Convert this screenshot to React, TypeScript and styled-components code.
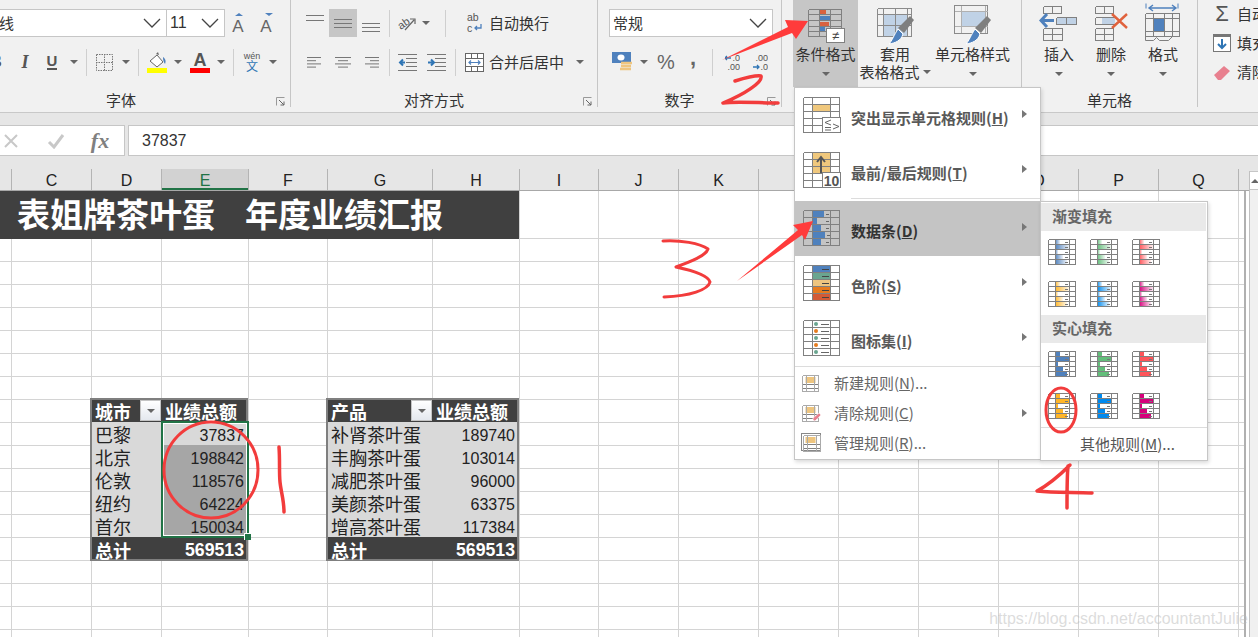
import React from "react";
import styled, { createGlobalStyle } from "styled-components";

const CJK = `"Noto Sans CJK SC", "Liberation Sans", sans-serif`;
const LATIN = `"Liberation Sans", "Noto Sans CJK SC", sans-serif`;
const LINE = "#808080";

const Global = createGlobalStyle`
  html, body { margin: 0; padding: 0; background: #fff; overflow: hidden; }
  * { box-sizing: border-box; }
`;

const Page = styled.div`
  position: relative;
  width: 1258px;
  height: 637px;
  overflow: hidden;
  font-family: ${CJK};
  color: #444;
`;

/* ---------- ribbon ---------- */
const Ribbon = styled.div`
  display: flex;
  height: 113px;
  background: #f1f1f1;
  border-bottom: 1px solid #c8c8c8;
`;
const Group = styled.section<{ $w: number; $ml?: number; $flat?: boolean }>`
  position: relative;
  flex: 0 0 ${(p) => p.$w}px;
  height: 107px;
  margin-left: ${(p) => p.$ml ?? 0}px;
  padding-top: ${(p) => (p.$flat ? 0 : 9)}px;
  border-right: 1px solid #c6c6c6;
  display: flex;
  flex-direction: column;
`;
const Row = styled.div<{ $pad?: number }>`
  display: flex;
  align-items: center;
  height: 28px;
  padding-left: ${(p) => p.$pad ?? 0}px;
  & + & { margin-top: 11px; }
`;
const GroupLabel = styled.div<{ $pr?: number }>`
  position: absolute;
  left: 0;
  right: 0;
  bottom: -2px;
  padding-right: ${(p) => p.$pr ?? 0}px;
  text-align: center;
  font-size: 15px;
  line-height: 18px;
  color: #333;
`;
const Launcher = styled.svg`
  position: absolute;
  right: 5px;
  bottom: 1px;
`;
const SelectBox = styled.div<{ $w: number }>`
  flex: 0 0 ${(p) => p.$w}px;
  height: 28px;
  margin-right: -1px;
  background: #fff;
  border: 1px solid #c6c6c6;
  display: flex;
  align-items: center;
  justify-content: space-between;
  padding: 0 5px 2px 3px;
  font-size: 15px;
  color: #333;
`;
const SizeText = styled.span`
  font-family: ${LATIN};
  font-size: 16px;
  padding-top: 2px;
`;
const Slot = styled.div<{ $w: number; $on?: boolean }>`
  flex: 0 0 ${(p) => p.$w}px;
  height: 28px;
  display: flex;
  align-items: center;
  justify-content: center;
  background: ${(p) => (p.$on ? "#c6c6c6" : "transparent")};
`;
const Sep = styled.div<{ $w?: number }>`
  flex: 0 0 ${(p) => p.$w ?? 8}px;
  height: 27px;
  position: relative;
  &::after {
    content: "";
    position: absolute;
    left: 50%;
    top: 0;
    bottom: 0;
    width: 1px;
    background: #cfcfcf;
  }
`;
const Caret = styled.span`
  display: inline-block;
  width: 0;
  height: 0;
  border-left: 4px solid transparent;
  border-right: 4px solid transparent;
  border-top: 4px solid #666;
`;
const GlyphB = styled.span`
  font: 700 16px ${LATIN};
  color: #555;
`;
const GlyphI = styled.span`
  font: italic 700 18px "Liberation Serif", serif;
  color: #555;
`;
const GlyphU = styled.span`
  font: 700 15px ${LATIN};
  color: #555;
  border-bottom: 2px solid #555;
  line-height: 14px;
`;
const RibbonText = styled.span`
  font-size: 15px;
  color: #333;
  white-space: nowrap;
  margin-top: -2px;
`;
const Percent = styled.span`
  font: 400 20px ${LATIN};
  color: #666;
`;
const Comma = styled.span`
  font: 700 22px ${LATIN};
  color: #666;
  margin-top: -8px;
`;
const BigRow = styled.div<{ $pad: number }>`
  display: flex;
  padding-left: ${(p) => p.$pad}px;
`;
const BigButton = styled.div<{ $w: number; $on?: boolean }>`
  flex: 0 0 ${(p) => p.$w}px;
  height: 87px;
  background: ${(p) => (p.$on ? "#c6c6c6" : "transparent")};
  display: flex;
  flex-direction: column;
  align-items: center;
  font-size: 15px;
  line-height: 18px;
  color: #333;
  white-space: nowrap;
`;
const BigIcon = styled.svg`
  display: block;
  height: 45px;
  flex: none;
`;
const BigLine = styled.div`
  display: flex;
  align-items: center;
  gap: 3px;
  height: 18px;
`;
const BigCaret = styled.div`
  height: 22px;
  display: flex;
  align-items: center;
`;
const EditRow = styled.div`
  display: flex;
  align-items: center;
  height: 29px;
  padding-left: 14px;
  gap: 5px;
  font-size: 15px;
  color: #333;
  white-space: nowrap;
  &:first-child { margin-top: -1px; }
`;
const Sigma = styled.span`
  width: 20px;
  text-align: center;
  font: 400 22px ${LATIN};
  color: #555;
`;
const EditIconBox = styled.svg`
  flex: 0 0 20px;
`;

/* ---------- formula bar ---------- */
const Band = styled.div`
  height: 56px;
  padding: 12px 0 13px;
  background: #e6e6e6;
  display: flex;
  gap: 3px;
`;
const NameBox = styled.div`
  flex: 0 0 125px;
  display: flex;
  align-items: center;
  background: #fff;
  border: 1px solid #c6c6c6;
  border-left: 0;
`;
const FxText = styled.span`
  font: italic 700 22px "Liberation Serif", serif;
  color: #808080;
`;
const Input = styled.div`
  flex: 1;
  background: #fff;
  border: 1px solid #c6c6c6;
  border-right: 0;
  padding-left: 13px;
  display: flex;
  align-items: center;
  font: 400 16px ${LATIN};
  color: #333;
`;

/* ---------- sheet ---------- */
const COLS = [12, 80, 70, 87, 79, 105, 87, 79, 80, 80, 80, 80, 80, 80, 80, 80, 7, 12];
const TRACKS = COLS.map((c) => `${c}px`).join(" ");
const HeadRow = styled.div`
  display: grid;
  grid-template-columns: ${TRACKS};
  height: 22px;
  background: #e6e6e6;
  border-bottom: 1px solid #a8a8a8;
`;
const HeadCell = styled.div<{ $on?: boolean; $plain?: boolean }>`
  display: flex;
  align-items: center;
  justify-content: center;
  padding-top: 2px;
  font: 400 16px ${LATIN};
  color: ${(p) => (p.$on ? "#217346" : "#222")};
  background: ${(p) => (p.$on ? "#d2d2d2" : "transparent")};
  border-right: ${(p) => (p.$plain ? "0" : "1px solid #b4b4b4")};
  box-shadow: ${(p) => (p.$on ? "inset 0 -2px 0 #217346" : "none")};
`;
const Sheet = styled.div`
  display: grid;
  grid-template-columns: ${TRACKS};
  grid-template-rows: 47px repeat(18, 23px);
  height: 446px;
  background:
    linear-gradient(#fff, #fff) 0 0 / 100% 47px no-repeat,
    linear-gradient(#d4d4d4 0 1px, transparent 1px) 0 47px / 100% 23px;
`;
const Strip = styled.div<{ $c: number; $edge?: boolean; $blank?: boolean }>`
  grid-column: ${(p) => p.$c};
  grid-row: 1 / -1;
  border-right: ${(p) => (p.$blank ? "0" : p.$edge ? "2px solid #b0b0b0" : "1px solid #d4d4d4")};
  background: ${(p) => (p.$blank ? "#fff" : "transparent")};
`;
const Title = styled.h1`
  grid-column: 1 / 8;
  grid-row: 1;
  z-index: 1;
  margin: 0 1px -1px 0;
  padding: 0 0 4px 17px;
  display: flex;
  gap: 30px;
  align-items: center;
  background: #404040;
  color: #fff;
  font: 700 33px/1 ${CJK};
`;
const Table = styled.div<{ $col: string }>`
  grid-column: ${(p) => p.$col};
  grid-row: 9 / 16;
  z-index: 1;
  margin: -1px 1px -1px -2px;
  border: 2px solid #7f7f7f;
  display: grid;
  grid-template-columns: 1fr 85px;
  grid-template-rows: 22px repeat(5, 23px) 22px;
  background: #d9d9d9;
`;
const HeadText = styled.div<{ $right?: boolean }>`
  position: relative;
  height: 22px;
  background: #404040;
  color: #fff;
  font: 700 18px/23px ${CJK};
  padding-left: ${(p) => (p.$right ? 4 : 3)}px;
  white-space: nowrap;
`;
const FilterBtn = styled.span`
  position: absolute;
  right: 0;
  top: 0;
  width: 21px;
  height: 21px;
  background: linear-gradient(#fff, #e4e8ee);
  border: 1px solid #c4c4c4;
  display: flex;
  align-items: center;
  justify-content: center;
`;
const NameCell = styled.div`
  height: 23px;
  font: 400 18px/25px ${CJK};
  color: #222;
  padding-left: 3px;
  white-space: nowrap;
`;
const NumCell = styled.div<{ $shade?: boolean }>`
  font: 400 16px/28px ${LATIN};
  height: 23px;
  overflow: hidden;
  color: #222;
  text-align: right;
  padding-right: 2px;
  background: ${(p) => (p.$shade ? "#a6a6a6" : "#d9d9d9")};
`;
const TotalName = styled.div`
  height: 22px;
  background: #404040;
  color: #fff;
  font: 700 18px/26px ${CJK};
  padding-left: 3px;
`;
const TotalNum = styled.div`
  height: 22px;
  background: #404040;
  color: #fff;
  font: 700 17.7px/27px ${LATIN};
  text-align: right;
  padding-right: 2px;
`;
const Selection = styled.div`
  grid-column: 4;
  grid-row: 10 / 15;
  z-index: 2;
  position: relative;
  margin: -1px 0 -1px -1px;
  border: 2px solid #217346;
  box-shadow: inset 0 0 0 1px #fff;
  &::after {
    content: "";
    position: absolute;
    right: -4px;
    bottom: -4px;
    width: 6px;
    height: 6px;
    background: #217346;
    border: 1px solid #fff;
    border-width: 1px 0 0 1px;
  }
`;
const ScrollBar = styled.div`
  position: absolute;
  left: 1249px;
  top: 171px;
  width: 9px;
  height: 466px;
  background: #f0f0f0;
  border-left: 1px solid #c0c0c0;
`;
const ScrollBtn = styled.div`
  height: 19px;
  background: #fff;
  border: 1px solid #c6c6c6;
  border-width: 1px 0;
  display: flex;
  align-items: center;
  padding-left: 1px;
  &::before {
    content: "";
    border-left: 4px solid transparent;
    border-right: 4px solid transparent;
    border-bottom: 4px solid #666;
  }
`;
const Watermark = styled.div`
  position: absolute;
  right: 10px;
  top: 608px;
  z-index: 5;
  font: 400 16px/22px ${LATIN};
  color: rgba(185, 185, 185, 0.5);
  white-space: nowrap;
`;

/* ---------- menus ---------- */
const Menu = styled.div`
  position: absolute;
  left: 794px;
  top: 87px;
  width: 247px;
  height: 373px;
  background: #fff;
  border: 1px solid #c6c6c6;
  box-shadow: 1px 2px 4px rgba(0, 0, 0, 0.15);
  z-index: 3;
`;
const BigItem = styled.div<{ $on?: boolean }>`
  display: flex;
  align-items: center;
  height: 55px;
  padding-left: 8px;
  gap: 11px;
  background: ${(p) => (p.$on ? "#c4c4c4" : "transparent")};
  font-size: 15px;
  font-weight: 700;
  color: ${(p) => (p.$on ? "#333" : "#595959")};
  white-space: nowrap;
`;
const ItemLabel = styled.span`
  padding-top: 4px;
`;
const U = styled.span`
  text-decoration: underline;
`;
const Arrow = styled.span<{ $mt?: number }>`
  margin-left: auto;
  margin-right: 13px;
  margin-top: ${(p) => p.$mt ?? -4}px;
  width: 0;
  height: 0;
  border-top: 4px solid transparent;
  border-bottom: 4px solid transparent;
  border-left: 5px solid #777;
`;
const MenuSep = styled.div<{ $ml?: number }>`
  height: 3px;
  margin-left: ${(p) => p.$ml ?? 0}px;
  border-top: 1px solid #dcdcdc;
`;
const SmallItem = styled.div`
  display: flex;
  align-items: center;
  height: 30px;
  padding: 0 0 3px 6px;
  font-size: 15px;
  color: #666;
  white-space: nowrap;
`;
const SmallIconBox = styled.svg`
  flex: 0 0 20px;
  margin-right: 13px;
`;
const Sub = styled.div`
  position: absolute;
  left: 1040px;
  top: 201px;
  width: 168px;
  height: 260px;
  padding-top: 1px;
  background: #fff;
  border: 1px solid #c6c6c6;
  box-shadow: 1px 2px 4px rgba(0, 0, 0, 0.15);
  z-index: 4;
`;
const SubHead = styled.div`
  height: 28px;
  margin-right: 1px;
  padding-left: 11px;
  background: #e9e9e9;
  font-size: 15px;
  font-weight: 700;
  line-height: 26px;
  color: #666;
`;
const SubGrid = styled.div`
  display: grid;
  grid-template-columns: repeat(3, 28px);
  gap: 16px 14px;
  padding: 8px 7px;
`;
const SubFoot = styled.div`
  border-top: 1px solid #dcdcdc;
  height: 31px;
  padding-left: 39px;
  font-size: 15px;
  line-height: 31px;
  color: #555;
  white-space: nowrap;
`;
const Marks = styled.svg`
  position: absolute;
  left: 0;
  top: 0;
  z-index: 6;
  pointer-events: none;
`;
const ChevronBox = styled.svg`
  margin-top: 2px;
`;
const IconFrame = styled.svg`
  flex: 0 0 39px;
  margin-right: -2px;
`;

/* ---------- icon parts ---------- */
const Lines = ({ xs, ys, c = LINE, w = 1 }: { xs: number[]; ys: number[]; c?: string; w?: number }) => (
  <path
    d={
      xs.map((x) => `M${x} ${ys[0]}V${ys[ys.length - 1]}`).join("") +
      ys.map((y) => `M${xs[0]} ${y}H${xs[xs.length - 1]}`).join("")
    }
    stroke={c}
    strokeWidth={w}
    fill="none"
    shapeRendering="crispEdges"
  />
);

const Chevron = () => (
  <ChevronBox width="18" height="10" viewBox="0 0 18 10">
    <path d="M1 1l8 8 8-8" fill="none" stroke="#444" strokeWidth="1.3" />
  </ChevronBox>
);

const AlignLines = ({ kind }: { kind: "top" | "mid" | "bot" | "left" | "center" | "right" }) => {
  const stroke = "#777";
  const map: Record<string, [number, number][]> = {
    left: [[0, 14], [0, 9], [0, 14], [0, 9]],
    center: [[0, 16], [3, 10], [0, 16], [3, 10]],
    right: [[2, 14], [7, 9], [2, 14], [7, 9]],
  };
  if (kind === "left" || kind === "center" || kind === "right") {
    return (
      <svg width="16" height="13" viewBox="0 0 16 13">
        {map[kind].map(([x, w], i) => (
          <path key={i} d={`M${x} ${1.5 + i * 3.2}h${w}`} stroke={stroke} />
        ))}
      </svg>
    );
  }
  const ys = kind === "top" ? [4.5, 9.5] : kind === "mid" ? [8.5, 12.5, 16.5] : [12.5, 16.5, 20.5];
  return (
    <svg width="18" height="24" viewBox="0 0 18 24">
      {ys.map((y) => (
        <path key={y} d={`M0 ${y}h18`} stroke={stroke} />
      ))}
    </svg>
  );
};

const IndentIcon = ({ flip }: { flip?: boolean }) => (
  <svg width="19" height="17" viewBox="0 0 19 17">
    <path d="M0 .5h19M8 4.5h11M8 8.5h11M8 12.5h11M0 16.5h19" stroke="#777" />
    <path d={flip ? "M1 8.5h5M4 5.5l3 3-3 3" : "M2 8.5h5M5 5.5l-3 3 3 3"} stroke="#2f75b5" strokeWidth="2" fill="none" />
  </svg>
);

const CondIcon = () => (
  <BigIcon width="40" viewBox="-1 0 40 45">
    <rect x="12" y="10" width="7" height="5" fill="#d9623f" />
    <rect x="12" y="16" width="11" height="5" fill="#4f81bd" />
    <rect x="12" y="22" width="10" height="5" fill="#d9623f" />
    <rect x="12" y="27" width="6" height="5" fill="#4f81bd" />
    <Lines xs={[1.5, 12.5, 23.5, 34.5]} ys={[9.5, 14.5, 20.5, 26.5, 31.5, 36.5]} />
    <rect x="19.5" y="28.5" width="18" height="14" fill="#fff" stroke={LINE} shapeRendering="crispEdges" />
    <text x="28.5" y="40" textAnchor="middle" fontSize="13" fill="#444" fontFamily="Liberation Sans">≠</text>
  </BigIcon>
);

const Brush = ({ x, y }: { x: number; y: number }) => (
  <g transform={`translate(${x} ${y})`}>
    <path d="M18 0l4 4-10 13-6-5z" fill="#7f7f7f" />
    <path d="M6 13l5 5c-2 7-8 9-14 10 3-3 5-9 9-15z" fill="#4f81bd" stroke="#fff" strokeWidth="1" />
  </g>
);

const TableIcon = () => (
  <BigIcon width="40" viewBox="0 0 40 45">
    <rect x="8" y="14" width="24" height="22" fill="#c0d2e6" />
    <Lines xs={[2.5, 8.5, 20.5, 32.5, 36.5]} ys={[8.5, 14.5, 25.5, 36.5]} c="#8a8a8a" />
    <Brush x={17} y={16} />
  </BigIcon>
);

const StyleIcon = () => (
  <BigIcon width="40" viewBox="0 0 40 45">
    <rect x="8" y="11" width="25" height="15" fill="#c0d2e6" />
    <rect x="1.5" y="5.5" width="33" height="28" fill="none" stroke="#8a8a8a" shapeRendering="crispEdges" />
    <path d="M8.5 5.5V33M1.5 11.5h33M1.5 26.5h33M32.5 5.5V33" stroke="#b0b0b0" shapeRendering="crispEdges" />
    <Brush x={16} y={16} />
  </BigIcon>
);

const InsertIcon = () => (
  <BigIcon width="40" viewBox="0 0 40 45">
    <Lines xs={[4.5, 13.5, 22.5]} ys={[6.5, 13.5]} />
    <Lines xs={[4.5, 13.5, 23.5]} ys={[28.5, 34.5, 40.5]} />
    <rect x="18" y="17" width="19" height="7" fill="#c0d2e6" />
    <Lines xs={[17.5, 27.5, 37.5]} ys={[17.5, 24.5]} />
    <path d="M2 20.5h13M8 14l-6 6.5L8 27" stroke="#4f81bd" strokeWidth="3" fill="none" />
  </BigIcon>
);

const DeleteIcon = () => (
  <BigIcon width="40" viewBox="0 0 40 45">
    <Lines xs={[4.5, 13.5, 22.5]} ys={[6.5, 13.5]} />
    <Lines xs={[4.5, 13.5, 22.5]} ys={[28.5, 34.5, 40.5]} />
    <rect x="11" y="17" width="13" height="7" fill="#c0d2e6" />
    <path d="M4.5 17.5h20M4.5 24.5h20M4.5 17.5v7" stroke={LINE} shapeRendering="crispEdges" />
    <path d="M21 14l15 14M36 14L21 28" stroke="#e0623d" strokeWidth="2.4" />
  </BigIcon>
);

const FormatIcon = () => (
  <BigIcon width="40" viewBox="0 0 40 45">
    <path d="M3 3.5v5M35 3.5v5" stroke="#4f81bd" />
    <path d="M6 8h27M10 5l-4 3 4 3M29 5l4 3-4 3" stroke="#4f81bd" strokeWidth="1.4" fill="none" />
    <rect x="11" y="19" width="10" height="12" fill="#4f81bd" />
    <Lines xs={[2.5, 10.5, 21.5, 29.5, 36.5]} ys={[13.5, 18.5, 31.5, 36.5]} />
    <path d="M2.5 36.5v4h8l3-3 3 3h9l4-4" stroke={LINE} fill="none" />
  </BigIcon>
);

const MENU_XS = [0.5, 9.5, 27.5, 36.5];
const MENU_YS = [0.5, 7.5, 14.5, 21.5, 28.5, 35.5];
const MenuIcon = ({ children }: { children: React.ReactNode }) => (
  <IconFrame width="39" height="37" viewBox="0 0 39 37">
    {children}
  </IconFrame>
);
const HighlightIcon = () => (
  <MenuIcon>
    <rect x="9" y="7" width="19" height="8" fill="#f0c87d" />
    <Lines xs={MENU_XS} ys={MENU_YS} />
    <rect x="19.5" y="20.5" width="18" height="15" fill="#fff" stroke={LINE} shapeRendering="crispEdges" />
    <path d="M28 23l-6 2.5 6 2.5M22 30.5h6M22 33h6M30 27l6 2.5-6 2.5" stroke="#666" fill="none" />
  </MenuIcon>
);
const TopIcon = () => (
  <MenuIcon>
    <rect x="9" y="0" width="19" height="21" fill="#f0c87d" />
    <Lines xs={MENU_XS} ys={MENU_YS} />
    <path d="M18 21V5M14 10l4-5 4 5" stroke="#555" strokeWidth="2" fill="none" />
    <rect x="19.5" y="20.5" width="18" height="15" fill="#fff" stroke={LINE} shapeRendering="crispEdges" />
    <text x="28.5" y="33.5" textAnchor="middle" fontSize="14" fill="#555" fontFamily="Liberation Sans">10</text>
  </MenuIcon>
);
const BarsIcon = () => (
  <MenuIcon>
    {[12, 5, 9, 13, 9].map((w, i) => (
      <g key={i}>
        <rect x="9" y={1 + i * 7} width={w} height="6" fill="#4f81bd" />
        <rect x={i === 3 ? 24 : 23} y={4 + i * 7} width="3" height="1" fill="#666" />
      </g>
    ))}
    <Lines xs={MENU_XS} ys={MENU_YS} />
  </MenuIcon>
);
const ScaleIcon = () => (
  <MenuIcon>
    {["#4f81bd", "#6aa58f", "#eec57f", "#e67b1e", "#d35a35"].map((c, i) => (
      <g key={c}>
        <rect x="9" y={1 + i * 7} width="18" height="6" fill={c} />
        <rect x="19" y={4 + i * 7} width="7" height="1" fill="#444" />
      </g>
    ))}
    <Lines xs={MENU_XS} ys={MENU_YS} />
  </MenuIcon>
);
const IconSetIcon = () => (
  <MenuIcon>
    <Lines xs={MENU_XS} ys={MENU_YS} />
    {["#6aa58f", "#e67b1e", "#6aa58f", "#e67b1e", "#6aa58f"].map((c, i) => (
      <g key={i}>
        <circle cx="13" cy={4 + i * 7} r="2" fill={c} />
        <rect x="18" y={4 + i * 7} width="8" height="1" fill="#666" />
      </g>
    ))}
  </MenuIcon>
);

const SmallIcon = ({ kind }: { kind: "new" | "clear" | "manage" }) => (
  <SmallIconBox width="20" height="20" viewBox="0 0 20 20">
    {kind === "manage" && <rect x="0.5" y="0.5" width="19" height="17" fill="none" stroke="#888" />}
    <rect x="4.5" y="4" width="10" height="6" fill="#eec57f" />
    <Lines xs={kind === "manage" ? [2.5, 19.5] : [1.5, 17.5]} ys={[2.5, 11.5, 15.5, 18.5]} />
    <Lines xs={kind === "manage" ? [2.5, 6.5, 15.5, 19.5] : [1.5, 5.5, 13.5, 17.5]} ys={[2.5, 18.5]} c="#aaa" />
    {kind === "clear" && <path d="M12 15l6-5 2 2-6 6-2-1z" fill="#e8808f" stroke="#fff" strokeWidth=".6" />}
  </SmallIconBox>
);

const SUB_XS = [0.5, 7.5, 21.5, 27.5];
const SUB_YS = [0.5, 5.5, 10.5, 15.5, 20.5, 25.5];
const SubIcon = ({ color, gradient }: { color: string; gradient?: boolean }) => {
  const id = `grad${color.slice(1)}`;
  return (
    <svg width="28" height="26" viewBox="0 0 28 26">
      {gradient && (
        <defs>
          <linearGradient id={id}>
            <stop offset="0" stopColor={color} />
            <stop offset="1" stopColor={color} stopOpacity="0.1" />
          </linearGradient>
        </defs>
      )}
      {[5, 14, 3, 8, 12].map((w, i) => (
        <rect key={i} x="7" y={1 + i * 5} width={w} height="4" fill={gradient ? `url(#${id})` : color} />
      ))}
      <Lines xs={SUB_XS} ys={SUB_YS} />
      {[0, 1, 2, 3, 4].map((i) => (
        <rect key={i} x="17" y={3 + i * 5} width="3" height="1" fill="#777" />
      ))}
    </svg>
  );
};

const PALETTE = ["#4f81bd", "#63be7b", "#ff555a", "#ffb628", "#008aef", "#d6007b"];

const Launch = () => (
  <Launcher width="9" height="9" viewBox="0 0 9 9">
    <path d="M.5 8.5v-8h8" fill="none" stroke="#999" />
    <path d="M3 3l5 5M8 4.5V8H4.5" fill="none" stroke="#666" />
  </Launcher>
);

const TABLE_A = [
  ["巴黎", "37837"],
  ["北京", "198842"],
  ["伦敦", "118576"],
  ["纽约", "64224"],
  ["首尔", "150034"],
];
const TABLE_B = [
  ["补肾茶叶蛋", "189740"],
  ["丰胸茶叶蛋", "103014"],
  ["减肥茶叶蛋", "96000"],
  ["美颜茶叶蛋", "63375"],
  ["增高茶叶蛋", "117384"],
];
const LETTERS = ["", "C", "D", "E", "F", "G", "H", "I", "J", "K", "L", "M", "N", "O", "P", "Q", "", ""];

const DataTable = ({ col, first, rows, shaded }: { col: string; first: string; rows: string[][]; shaded?: boolean }) => (
  <Table $col={col}>
    <HeadText>
      {first}
      <FilterBtn>
        <Caret />
      </FilterBtn>
    </HeadText>
    <HeadText $right>业绩总额</HeadText>
    {rows.map(([a, b], i) => (
      <React.Fragment key={a}>
        <NameCell>{a}</NameCell>
        <NumCell $shade={shaded && i > 0}>{b}</NumCell>
      </React.Fragment>
    ))}
    <TotalName>总计</TotalName>
    <TotalNum>569513</TotalNum>
  </Table>
);

export default function App() {
  return (
    <Page>
      <Global />
      <Ribbon>
        <Group $w={339} $ml={-48}>
          <Row $pad={28}>
            <SelectBox $w={187}>
              <span>等线</span>
              <Chevron />
            </SelectBox>
            <SelectBox $w={59}>
              <SizeText>11</SizeText>
              <Chevron />
            </SelectBox>
            <Slot $w={29}>
              <svg width="18" height="22" viewBox="0 0 18 22">
                <path d="M9 1l4 3H5z" fill="#4f81bd" />
                <text x="8" y="20" textAnchor="middle" fontSize="17" fill="#666" fontFamily="Liberation Sans">A</text>
              </svg>
            </Slot>
            <Slot $w={27}>
              <svg width="18" height="22" viewBox="0 0 18 22">
                <path d="M7 1h8l-4 3z" fill="#4f81bd" />
                <text x="8" y="20" textAnchor="middle" fontSize="17" fill="#666" fontFamily="Liberation Sans">A</text>
              </svg>
            </Slot>
          </Row>
          <Row $pad={29}>
            <Slot $w={30}><GlyphB>B</GlyphB></Slot>
            <Slot $w={28}><GlyphI>I</GlyphI></Slot>
            <Slot $w={26}><GlyphU>U</GlyphU></Slot>
            <Slot $w={18}><Caret /></Slot>
            <Sep $w={6} />
            <Slot $w={31}>
              <svg width="17" height="17" viewBox="0 0 17 17">
                <path d="M.5.5h16v16H.5zM8.5 0v17M0 8.5h17" fill="none" stroke="#777" strokeDasharray="1.5 1" />
              </svg>
            </Slot>
            <Slot $w={12}><Caret /></Slot>
            <Sep $w={12} />
            <Slot $w={26}>
              <svg width="21" height="21" viewBox="0 0 21 21">
                <path d="M3 9l7-6 6 7-6 5z" fill="#fff" stroke="#666" />
                <path d="M9 2l2-2 1 3z" fill="#666" />
                <path d="M16 5c3 2 3 5 2 7-1-2-2-3-2-7z" fill="#4f81bd" />
                <rect x="0" y="16" width="20" height="5" fill="#ffff00" />
              </svg>
            </Slot>
            <Slot $w={16}><Caret /></Slot>
            <Slot $w={28}>
              <svg width="20" height="21" viewBox="0 0 20 21">
                <text x="10" y="14" textAnchor="middle" fontSize="18" fontWeight="700" fill="#555" fontFamily="Liberation Sans">A</text>
                <rect x="0" y="16" width="20" height="5" fill="#ff0000" />
              </svg>
            </Slot>
            <Slot $w={14}><Caret /></Slot>
            <Sep $w={10} />
            <Slot $w={28}>
              <svg width="18" height="20" viewBox="0 0 18 20">
                <text x="9" y="7" textAnchor="middle" fontSize="9" fill="#555" fontFamily="Liberation Sans">wén</text>
                <text x="9" y="19" textAnchor="middle" fontSize="12" fill="#2f75b5" fontFamily="Noto Sans CJK SC">文</text>
              </svg>
            </Slot>
            <Slot $w={14}><Caret /></Slot>
          </Row>
          <GroupLabel>字体</GroupLabel>
          <Launch />
        </Group>

        <Group $w={307}>
          <Row $pad={10}>
            <Slot $w={28}><AlignLines kind="top" /></Slot>
            <Slot $w={28} $on><AlignLines kind="mid" /></Slot>
            <Slot $w={28}><AlignLines kind="bot" /></Slot>
            <Sep />
            <Slot $w={28}>
              <svg width="18" height="18" viewBox="0 0 18 18">
                <text x="0" y="13" fontSize="11" fill="#555" transform="rotate(-35 6 10)" fontFamily="Liberation Sans">ab</text>
                <path d="M7 16L16 6M12 5h5v5" stroke="#666" fill="none" strokeWidth="1.2" />
              </svg>
            </Slot>
            <Slot $w={10}><Caret /></Slot>
            <Sep $w={28} />
            <Slot $w={30}>
              <svg width="17" height="22" viewBox="0 0 17 22">
                <text x="1" y="9" fontSize="10.5" fill="#555" fontFamily="Liberation Sans">ab</text>
                <text x="1" y="20" fontSize="10.5" fill="#555" fontFamily="Liberation Sans">c</text>
                <path d="M15 12v4H9M11 14l-2 2 2 2" fill="none" stroke="#4f81bd" strokeWidth="1.3" />
              </svg>
            </Slot>
            <RibbonText>自动换行</RibbonText>
          </Row>
          <Row $pad={10}>
            <Slot $w={28}><AlignLines kind="left" /></Slot>
            <Slot $w={28}><AlignLines kind="center" /></Slot>
            <Slot $w={28}><AlignLines kind="right" /></Slot>
            <Sep />
            <Slot $w={29}><IndentIcon /></Slot>
            <Slot $w={28}><IndentIcon flip /></Slot>
            <Sep $w={9} />
            <Slot $w={30}>
              <svg width="19" height="19" viewBox="0 0 19 19">
                <rect x=".5" y=".5" width="18" height="18" fill="#fff" stroke="#666" />
                <path d="M0 5.5h19M0 13.5h19M6.5 0v5M12.5 0v5M6.5 14v5M12.5 14v5" stroke="#666" />
                <path d="M4 9.5h11M6 7.5l-2 2 2 2M13 7.5l2 2-2 2" fill="none" stroke="#4f81bd" strokeWidth="1.2" />
              </svg>
            </Slot>
            <RibbonText>合并后居中</RibbonText>
            <Slot $w={32}><Caret /></Slot>
          </Row>
          <GroupLabel $pr={20}>对齐方式</GroupLabel>
          <Launch />
        </Group>

        <Group $w={184}>
          <Row $pad={11}>
            <SelectBox $w={164}>
              <span>常规</span>
              <Chevron />
            </SelectBox>
          </Row>
          <Row $pad={10}>
            <Slot $w={28}>
              <svg width="20" height="20" viewBox="0 0 20 20">
                <rect x="0" y="0" width="19" height="11" fill="#4f81bd" />
                <ellipse cx="9" cy="5.5" rx="3.5" ry="3" fill="#fff" />
                <path d="M9 11h11M9 14h10M8 17h11" stroke="#eec57f" strokeWidth="2.4" />
              </svg>
            </Slot>
            <Slot $w={16}><Caret /></Slot>
            <Slot $w={28}><Percent>%</Percent></Slot>
            <Slot $w={26}><Comma>,</Comma></Slot>
            <Sep $w={12} />
            <Slot $w={28}>
              <svg width="15" height="16" viewBox="0 0 15 16">
                <text x="15" y="7" textAnchor="end" fontSize="9" fill="#555" fontFamily="Liberation Sans">.0</text>
                <text x="15" y="16" textAnchor="end" fontSize="9" fill="#555" fontFamily="Liberation Sans">.00</text>
                <path d="M0 4h6M2 2L0 4l2 2" fill="none" stroke="#2f75b5" strokeWidth="1.3" />
              </svg>
            </Slot>
            <Slot $w={28}>
              <svg width="15" height="16" viewBox="0 0 15 16">
                <text x="15" y="7" textAnchor="end" fontSize="9" fill="#555" fontFamily="Liberation Sans">.00</text>
                <text x="15" y="16" textAnchor="end" fontSize="9" fill="#555" fontFamily="Liberation Sans">.0</text>
                <path d="M0 13h6M4 11l2 2-2 2" fill="none" stroke="#2f75b5" strokeWidth="1.3" />
              </svg>
            </Slot>
          </Row>
          <GroupLabel $pr={20}>数字</GroupLabel>
          <Launch />
        </Group>

        <Group $w={240} $flat>
          <BigRow $pad={11}>
            <BigButton $w={65} $on>
              <CondIcon />
              <BigLine>条件格式</BigLine>
              <BigCaret><Caret /></BigCaret>
            </BigButton>
            <BigButton $w={74}>
              <TableIcon />
              <BigLine>套用</BigLine>
              <BigLine>表格格式<Caret /></BigLine>
            </BigButton>
            <BigButton $w={81}>
              <StyleIcon />
              <BigLine>单元格样式</BigLine>
              <BigCaret><Caret /></BigCaret>
            </BigButton>
          </BigRow>
        </Group>

        <Group $w={176} $flat>
          <BigRow $pad={11}>
            <BigButton $w={52}>
              <InsertIcon />
              <BigLine>插入</BigLine>
              <BigCaret><Caret /></BigCaret>
            </BigButton>
            <BigButton $w={52}>
              <DeleteIcon />
              <BigLine>删除</BigLine>
              <BigCaret><Caret /></BigCaret>
            </BigButton>
            <BigButton $w={52}>
              <FormatIcon />
              <BigLine>格式</BigLine>
              <BigCaret><Caret /></BigCaret>
            </BigButton>
          </BigRow>
          <GroupLabel>单元格</GroupLabel>
        </Group>

        <Group $w={60} $flat>
          <EditRow><Sigma>Σ</Sigma>自动求和</EditRow>
          <EditRow>
            <EditIconBox width="20" height="20" viewBox="0 0 20 20">
              <rect x="1.5" y="1.5" width="17" height="17" fill="#fff" stroke="#777" />
              <rect x="1" y="1" width="18" height="3" fill="#777" />
              <path d="M10 6v9M6 11l4 4 4-4" fill="none" stroke="#2f75b5" strokeWidth="2" />
            </EditIconBox>
            填充
          </EditRow>
          <EditRow>
            <EditIconBox width="20" height="20" viewBox="0 0 20 20">
              <path d="M2 13L12 4l6 5-9 9H6z" fill="#e8808f" />
            </EditIconBox>
            清除
          </EditRow>
        </Group>
      </Ribbon>

      <Band>
        <NameBox>
          <Slot $w={22}>
            <svg width="16" height="16" viewBox="0 0 16 16"><path d="M2 2l12 12M14 2L2 14" stroke="#c8c8c8" strokeWidth="2" /></svg>
          </Slot>
          <Slot $w={68}>
            <svg width="18" height="16" viewBox="0 0 18 16"><path d="M2 9l5 5L16 2" fill="none" stroke="#c8c8c8" strokeWidth="3" /></svg>
          </Slot>
          <Slot $w={20}><FxText>fx</FxText></Slot>
        </NameBox>
        <Input>37837</Input>
      </Band>

      <HeadRow>
        {LETTERS.map((l, i) => (
          <HeadCell key={i} $on={l === "E"} $plain={i >= 16}>{l}</HeadCell>
        ))}
      </HeadRow>

      <Sheet>
        {COLS.map((_, i) => (
          <Strip key={i} $c={i + 1} $edge={i === 16} $blank={i === 17} />
        ))}
        <Title>
          <span>表姐牌茶叶蛋</span>
          <span>年度业绩汇报</span>
        </Title>
        <DataTable col="3 / 5" first="城市" rows={TABLE_A} shaded />
        <DataTable col="6 / 8" first="产品" rows={TABLE_B} />
        <Selection />
      </Sheet>

      <ScrollBar><ScrollBtn /></ScrollBar>
      <Watermark>https://blog.csdn.net/accountantJulie</Watermark>

      <Menu>
        <BigItem><HighlightIcon /><ItemLabel>突出显示单元格规则(<U>H</U>)</ItemLabel><Arrow /></BigItem>
        <BigItem><TopIcon /><ItemLabel>最前/最后规则(<U>T</U>)</ItemLabel><Arrow /></BigItem>
        <MenuSep $ml={56} />
        <BigItem $on><BarsIcon /><ItemLabel>数据条(<U>D</U>)</ItemLabel><Arrow /></BigItem>
        <BigItem><ScaleIcon /><ItemLabel>色阶(<U>S</U>)</ItemLabel><Arrow /></BigItem>
        <BigItem><IconSetIcon /><ItemLabel>图标集(<U>I</U>)</ItemLabel><Arrow /></BigItem>
        <MenuSep />
        <SmallItem><SmallIcon kind="new" />新建规则(<U>N</U>)...</SmallItem>
        <SmallItem><SmallIcon kind="clear" />清除规则(<U>C</U>)<Arrow $mt={0} /></SmallItem>
        <SmallItem><SmallIcon kind="manage" />管理规则(<U>R</U>)...</SmallItem>
      </Menu>

      <Sub>
        <SubHead>渐变填充</SubHead>
        <SubGrid>
          {PALETTE.map((c) => <SubIcon key={c} color={c} gradient />)}
        </SubGrid>
        <SubHead>实心填充</SubHead>
        <SubGrid>
          {PALETTE.map((c) => <SubIcon key={c} color={c} />)}
        </SubGrid>
        <SubFoot>其他规则(<U>M</U>)...</SubFoot>
      </Sub>

      <Marks width="1258" height="637" viewBox="0 0 1258 637">
        <g fill="#ff3b3b" stroke="none">
          <path d="M722 60L788 27 785 20 808 21 796 39 792 33Z" />
          <path d="M737 281L798 230 793 225 813 221 805 240 802 235Z" />
        </g>
        <g fill="none" stroke="#f23c3c" strokeLinecap="round" strokeLinejoin="round">
          <path d="M735 81C745 78 755 75 761 76 763 82 745 94 723 103 735 101 760 103 778 103" strokeWidth="3.5" />
          <path d="M663 241C680 240 700 243 708 249 706 256 690 262 676 267 690 270 708 275 710 282 708 290 690 296 664 297" strokeWidth="3" />
          <path d="M279 447C280 460 279 472 280 482 281 492 284 500 284 512" strokeWidth="3.5" />
          <ellipse cx="211" cy="470" rx="47" ry="48" strokeWidth="3" />
          <ellipse cx="1061" cy="410" rx="15" ry="22" strokeWidth="3" />
          <path d="M1070 465C1060 475 1048 485 1037 491 1055 493 1075 492 1092 493M1068 466C1067 476 1067 495 1067 508" strokeWidth="3.5" />
        </g>
      </Marks>
    </Page>
  );
}
